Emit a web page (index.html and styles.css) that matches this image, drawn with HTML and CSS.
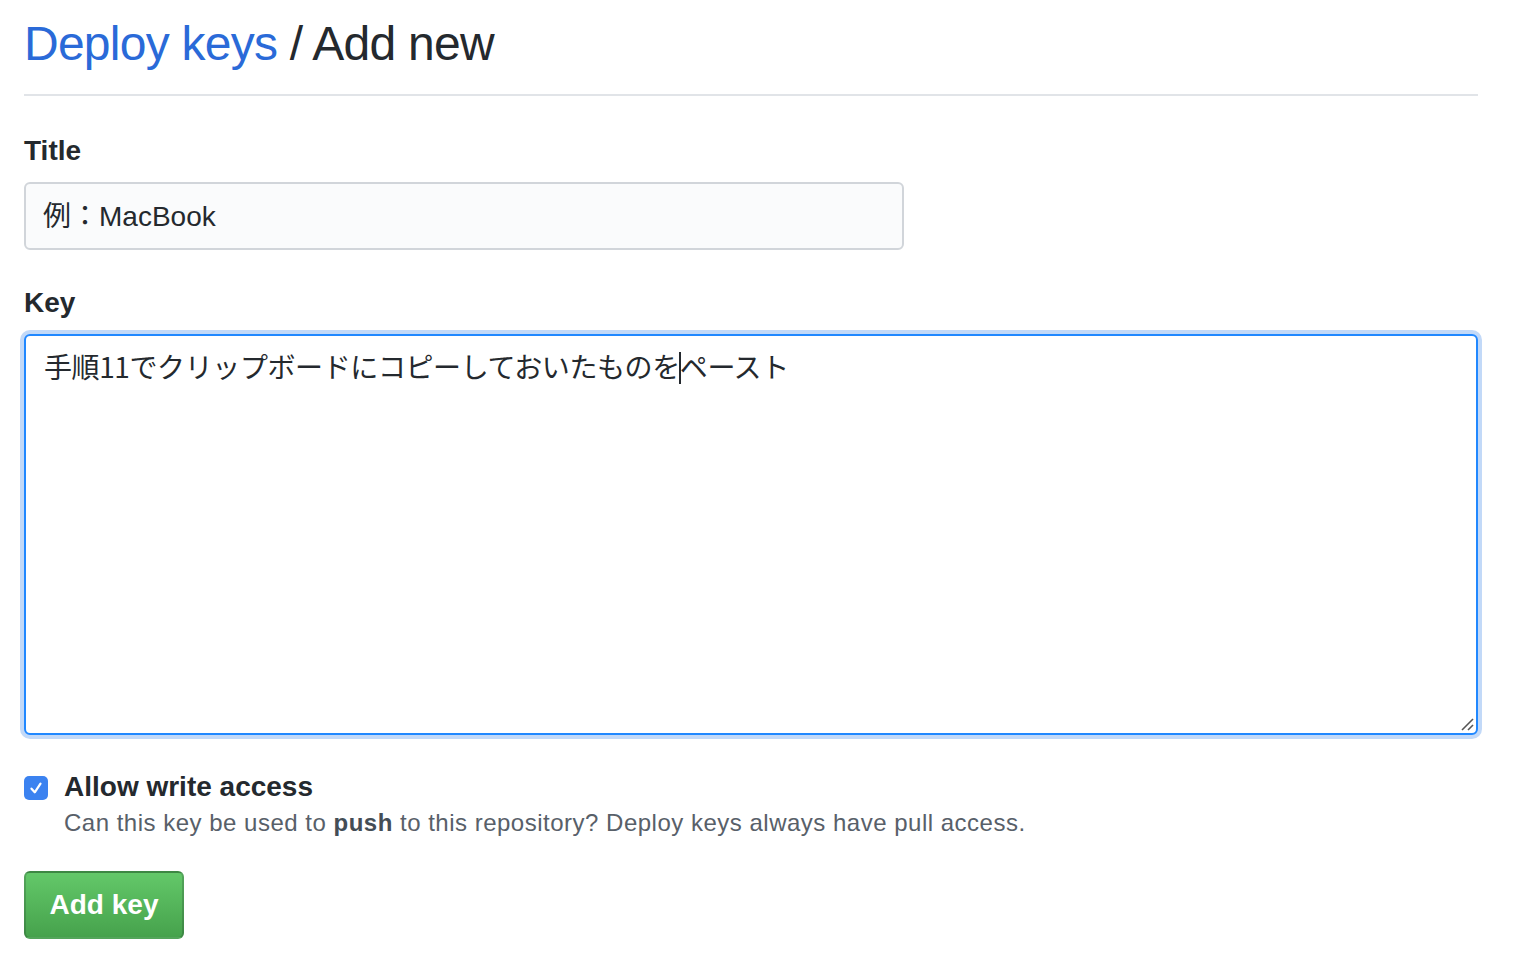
FILE: index.html
```html
<!DOCTYPE html>
<html lang="ja">
  <head>
    <meta charset="utf-8">
    <link rel="stylesheet" href="styles.css">
  </head>
  <body>
    <div class="page">
      <!-- Page heading -->
      <h1 class="subhead"><a class="subhead-link" href="#">Deploy keys</a> / Add new</h1>

      <form class="key-form">
        <div class="form-group">
          <label class="form-label" for="title">Title</label>
          <div class="input-title" id="title">例：MacBook</div>
        </div>

        <div class="form-group">
          <label class="form-label" for="key">Key</label>
          <div class="input-key" id="key">
            <span>手順11でクリップボードにコピーしておいたものを</span><span class="caret"></span><span>ペースト</span>
            <svg class="grip" width="16" height="16" viewBox="0 0 16 16">
              <line x1="3" y1="14" x2="14" y2="3" stroke="#555" stroke-width="1.6" />
              <line x1="9" y1="14" x2="14" y2="9" stroke="#555" stroke-width="1.6" />
            </svg>
          </div>
        </div>

        <div class="check-row">
          <span class="checkbox">
            <svg width="18" height="18" viewBox="0 0 16 16">
              <path d="M4 8.6 L6.9 11.8 L12 4.2" fill="none" stroke="#fff" stroke-width="2" stroke-linecap="round" stroke-linejoin="round" />
            </svg>
          </span>
          <div class="check-text">
            <div class="check-label">Allow write access</div>
            <p class="note">Can this key be used to <strong>push</strong> to this repository? Deploy keys always have pull access.</p>
          </div>
        </div>

        <button type="button" class="btn-primary">Add key</button>
      </form>
    </div>
  </body>
</html>
```

FILE: styles.css
```css
/* Base */
body {
  margin: 0;
  background: #fff;
  color: #24292e;
  font-family: "Liberation Sans", Arial, "Noto Sans CJK JP", sans-serif;
}

.page {
  width: 1454px;
  padding: 14px 0 0 24px;
}

/* Heading with the bottom rule */
.subhead {
  margin: 0;
  padding-bottom: 20px;
  border-bottom: 2px solid #e1e4e8;
  font-size: 48px;
  font-weight: 400;
  line-height: 60px;
  letter-spacing: -0.75px;
  color: #24292e;
}

.subhead-link {
  color: #2a6ad8;
  text-decoration: none;
}

.key-form {
  padding-top: 37px;
}

.form-group {
  margin-bottom: 36px;
}

.form-group + .form-group {
  margin-top: -1px;
}

.form-label {
  display: block;
  margin-bottom: 13px;
  font-size: 28px;
  font-weight: 700;
  line-height: 36px;
}

/* Title input */
.input-title {
  box-sizing: border-box;
  width: 880px;
  height: 68px;
  padding: 0 17px;
  background: #fafbfc;
  border: 2px solid #d1d5da;
  border-radius: 6px;
  font-size: 28px;
  line-height: 66px;
  font-family: "Liberation Sans", Arial, "Noto Sans CJK JP", sans-serif;
}

/* Key textarea (focused) */
.input-key {
  position: relative;
  box-sizing: border-box;
  width: 1454px;
  height: 401px;
  padding: 11px 18px;
  background: #fff;
  border: 2px solid #2188ff;
  border-radius: 6px;
  box-shadow: 0 0 0 4px #c2d9f8;
  font-size: 28px;
  line-height: 38px;
  font-family: "Noto Sans CJK JP", sans-serif;
  letter-spacing: -0.4px;
}

.caret {
  display: inline-block;
  width: 2px;
  height: 32px;
  margin: 0 -1px;
  background: #24292e;
  vertical-align: -6px;
}

.grip {
  position: absolute;
  right: 1px;
  bottom: 1px;
}

/* Checkbox row */
.check-row {
  display: flex;
  gap: 16px;
  margin-top: 32px;
}

.checkbox {
  flex: none;
  display: flex;
  align-items: center;
  justify-content: center;
  width: 24px;
  height: 24px;
  margin-top: 5px;
  background: #3b82f0;
  border-radius: 5px;
}

.check-label {
  font-size: 28px;
  font-weight: 700;
  line-height: 32px;
}

.note {
  margin: 4px 0 0;
  font-size: 24px;
  line-height: 32px;
  letter-spacing: 0.5px;
  color: #586069;
}

.note strong {
  color: #444d56;
}

/* Submit button */
.btn-primary {
  margin-top: 32px;
  width: 160px;
  height: 68px;
  padding: 0;
  border: 2px solid rgba(27, 31, 35, 0.2);
  border-radius: 6px;
  background-image: linear-gradient(-180deg, #63c869 0%, #46a24c 100%);
  color: #fff;
  font-family: "Liberation Sans", Arial, sans-serif;
  font-size: 28px;
  font-weight: 700;
  cursor: pointer;
}
```
